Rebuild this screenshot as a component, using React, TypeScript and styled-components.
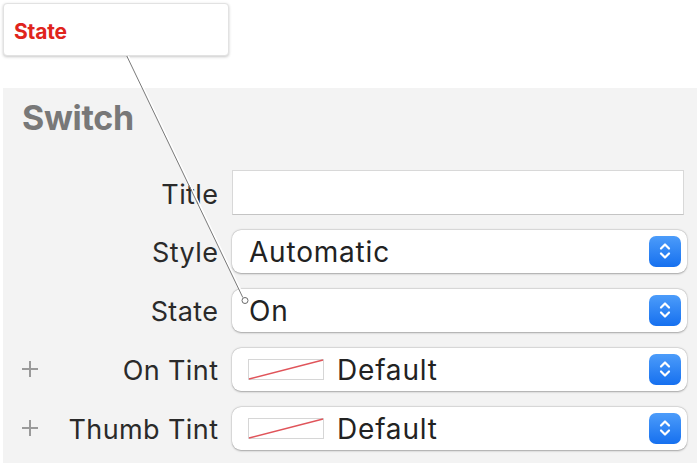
import React from "react";
import styled, { createGlobalStyle } from "styled-components";

const Global = createGlobalStyle`
  html, body { margin: 0; padding: 0; background: #ffffff; }
  body { font-family: Inter, "Noto Sans", "Liberation Sans", sans-serif; }
`;

const Page = styled.div`
  position: relative;
  width: 697px;
  height: 463px;
  overflow: hidden;
  background: #ffffff;
`;

const Top = styled.div`
  height: 88px;
  padding: 3px 0 0 3px;
  box-sizing: border-box;
`;

const Callout = styled.div`
  width: 226px;
  height: 53px;
  box-sizing: border-box;
  background: #ffffff;
  border: 1px solid #e2e2e2;
  border-radius: 4px;
  box-shadow: 0 1px 3px rgba(0, 0, 0, 0.22);
  display: flex;
  align-items: center;
  padding-left: 10px;
  padding-top: 4px;
  color: #e0241c;
  font-weight: 700;
  font-size: 21px;
  letter-spacing: -0.2px;
`;

const Panel = styled.div`
  margin-left: 3px;
  height: 375px;
  background: #f3f3f3;
  padding: 12px 10px 0 0;
  box-sizing: border-box;
`;

const Heading = styled.div`
  padding-left: 19px;
  font-size: 34px;
  line-height: 36px;
  font-weight: 700;
  color: #787878;
  letter-spacing: -0.3px;
`;

const Rows = styled.div`
  margin-top: 34px;
  display: flex;
  flex-direction: column;
  gap: 15px;
`;

const Row = styled.div`
  display: grid;
  grid-template-columns: 215px 1fr;
  column-gap: 14px;
  align-items: center;
  height: 44px;
`;

const LabelCell = styled.div`
  display: flex;
  align-items: center;
  justify-content: space-between;
  padding-left: 19px;
  padding-top: 3px;
`;

const Label = styled.span`
  margin-left: auto;
  font-size: 27px;
  color: #2a2a2a;
  letter-spacing: 0.4px;
  margin-right: -0.4px;
`;

const Plus = styled.span`
  position: relative;
  width: 16px;
  height: 16px;
  margin-top: -3px;
  &::before, &::after {
    content: "";
    position: absolute;
    background: #9a9a9a;
  }
  &::before { left: 0; right: 0; top: 7px; height: 2px; }
  &::after { top: 0; bottom: 0; left: 7px; width: 2px; }
`;

const TextField = styled.div`
  height: 45px;
  margin-right: 3px;
  box-sizing: border-box;
  background: #ffffff;
  border: 1px solid #d8d8d8;
  border-bottom-color: #c4c4c4;
`;

const Popup = styled.div`
  height: 43px;
  box-sizing: border-box;
  background: #ffffff;
  border-radius: 9px;
  box-shadow: 0 0.5px 2px rgba(0, 0, 0, 0.3), 0 0 0 0.5px rgba(0, 0, 0, 0.07);
  display: flex;
  align-items: center;
  padding: 0 6px 0 16px;
  gap: 12px;
`;

const Value = styled.span`
  flex: 1;
  font-size: 28px;
  color: #222222;
  letter-spacing: 0.8px;
  padding-left: 1px;
  padding-top: 2px;
`;

const Swatch = styled.svg`
  width: 76px;
  height: 21px;
  flex: none;
`;

const Stepper = styled.div`
  width: 32px;
  height: 31px;
  flex: none;
  border-radius: 7px;
  background: linear-gradient(#4c9cfa, #1670ef);
  display: flex;
  align-items: center;
  justify-content: center;
`;

const Overlay = styled.svg`
  position: absolute;
  left: 0;
  top: 0;
  width: 697px;
  height: 463px;
  pointer-events: none;
`;

const Chevrons = () => (
  <Stepper>
    <svg width="14" height="20" viewBox="0 0 14 20">
      <path d="M3 7.5 L7 3.5 L11 7.5" fill="none" stroke="#fff" strokeWidth="2.2" strokeLinecap="round" strokeLinejoin="round" />
      <path d="M3 12.5 L7 16.5 L11 12.5" fill="none" stroke="#fff" strokeWidth="2.2" strokeLinecap="round" strokeLinejoin="round" />
    </svg>
  </Stepper>
);

const ColorSwatch = () => (
  <Swatch viewBox="0 0 76 21">
    <rect x="0.5" y="0.5" width="75" height="20" fill="#fff" stroke="#d6d6d6" />
    <line x1="1" y1="20" x2="75" y2="1" stroke="#e0545a" strokeWidth="1.4" />
  </Swatch>
);

type Field = { label: string; kind: "text" | "popup" | "color"; value?: string; plus?: boolean };

const fields: Field[] = [
  { label: "Title", kind: "text" },
  { label: "Style", kind: "popup", value: "Automatic" },
  { label: "State", kind: "popup", value: "On" },
  { label: "On Tint", kind: "color", value: "Default", plus: true },
  { label: "Thumb Tint", kind: "color", value: "Default", plus: true },
];

export default function App() {
  return (
    <Page>
      <Global />
      <Top>
        <Callout>State</Callout>
      </Top>
      <Panel>
        <Heading>Switch</Heading>
        <Rows>
          {fields.map((f) => (
            <Row key={f.label}>
              <LabelCell>
                {f.plus && <Plus />}
                <Label>{f.label}</Label>
              </LabelCell>
              {f.kind === "text" ? (
                <TextField />
              ) : (
                <Popup>
                  {f.kind === "color" && <ColorSwatch />}
                  <Value>{f.value}</Value>
                  <Chevrons />
                </Popup>
              )}
            </Row>
          ))}
        </Rows>
      </Panel>
      <Overlay viewBox="0 0 697 463">
        <line x1="128.2" y1="56" x2="244.2" y2="297.5" stroke="#ffffff" strokeWidth="1.6" />
        <line x1="126.8" y1="56" x2="242.8" y2="297.5" stroke="#7a7a7a" strokeWidth="1" />
        <circle cx="245" cy="300.5" r="3" fill="#ffffff" stroke="#6a6a6a" strokeWidth="1" />
      </Overlay>
    </Page>
  );
}
